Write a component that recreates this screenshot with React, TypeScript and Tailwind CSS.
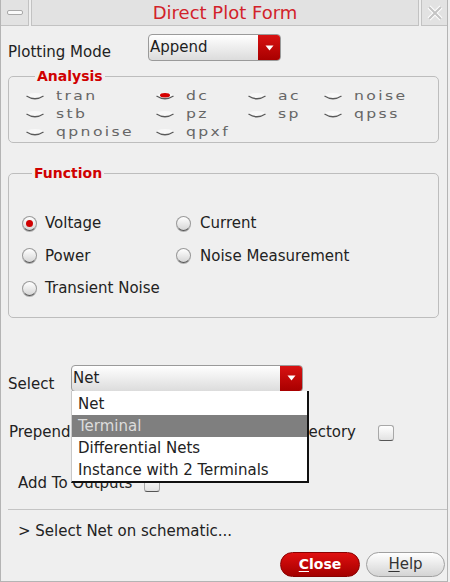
import React from "react";

const SmallRadio = ({ on }: { on?: boolean }) => (
  <svg width="20" height="9" viewBox="0 0 20 9" className="shrink-0">
    <ellipse cx="10" cy="4" rx="9" ry="3" fill="#f8f8f8" />
    <path d="M1.5 4 Q10 9.5 18.5 4" stroke="#5a5a5a" strokeWidth="1.4" fill="none" />
    {on && <ellipse cx="10" cy="3.2" rx="5" ry="2.2" fill="#d40000" />}
  </svg>
);

const BigRadio = ({ on }: { on?: boolean }) => (
  <div className="w-[15px] h-[15px] shrink-0 rounded-full border border-[#9a9a9a] border-b-[#555] bg-linear-to-b from-white to-[#d6d6d6] flex items-center justify-center shadow-[0_1px_0_#b0b0b0]">
    {on && <div className="w-[7px] h-[7px] rounded-full bg-[#d00000]" />}
  </div>
);

const Check = () => (
  <div className="w-[16px] h-[16px] rounded-[3px] border border-[#a8a8a8] border-b-[#555] bg-linear-to-b from-white to-[#e2e2e2]" />
);

const Arrow = () => (
  <div className="w-[22px] h-full bg-linear-to-b from-[#d81212] to-[#a80000] flex items-center justify-center">
    <svg width="9" height="6" viewBox="0 0 9 6">
      <path d="M0.5 0.5 L8.5 0.5 L4.5 5.5 Z" fill="#fff" />
    </svg>
  </div>
);

const Combo = ({ text, w }: { text: string; w: string }) => (
  <div className={`flex h-[27px] ${w} rounded-[4px] border border-[#9a9a9a] bg-linear-to-b from-white to-[#dcdcdc] overflow-hidden`}>
    <span className="flex-1 pl-[1px] text-[15px] leading-[24px] text-[#1e1e1e]">{text}</span>
    <Arrow />
  </div>
);

const AItem = ({ on, t }: { on?: boolean; t: string }) => (
  <div className="flex items-center gap-[11px] h-[18px]">
    <SmallRadio on={on} />
    <span className="inline-block origin-left scale-x-[1.2] text-[13px] tracking-[2px] text-[#666]">{t}</span>
  </div>
);

export default function App() {
  return (
    <div className="w-[450px] h-[582px] bg-[#efefef] overflow-hidden font-['DejaVu_Sans',sans-serif]">
      <div className="w-[448px] h-[582px] border-r border-l border-b border-[#b4b4b4] flex flex-col">
        {/* Title bar */}
        <div className="h-[27px] flex gap-[2px] shrink-0">
          <div className="w-[28px] h-[26px] bg-[#e2e2e2] border-r border-b border-[#c2c2c2] flex items-center justify-center">
            <div className="w-[16px] h-[5px] rounded-[2px] bg-[#fafafa] border border-[#a8a8a8]" />
          </div>
          <div className="flex-1 h-[26px] bg-[#e2e2e2] border-x border-b border-[#c2c2c2] flex items-center justify-center">
            <span className="text-[18px] leading-[22px] text-[#d2222a]">Direct Plot Form</span>
          </div>
          <div className="w-[26px] h-[26px] bg-[#e2e2e2] border-l border-b border-[#c2c2c2] flex items-center justify-center">
            <svg width="16" height="16" viewBox="0 0 16 16">
              <path d="M2 2 L14 14 M14 2 L2 14" stroke="#ffffff" strokeWidth="4" />
              <path d="M2 2 L14 14 M14 2 L2 14" stroke="#c4c4c4" strokeWidth="2" />
            </svg>
          </div>
        </div>

        {/* Plotting mode */}
        <div className="mt-[7px] h-[27px] flex">
          <span className="pl-[7px] w-[147px] text-[15px] leading-[18px] pt-[9px] text-[#222]">Plotting Mode</span>
          <Combo text="Append" w="w-[133px]" />
        </div>

        {/* Analysis */}
        <fieldset className="mt-[7px] ml-[7px] w-[431px] border border-[#bdbdbd] rounded-[5px] pb-[1px] pl-[16px]">
          <legend className="ml-[10px] px-[2px] text-[14px] leading-[16px] font-bold text-[#d00000]">Analysis</legend>
          <div className="grid grid-cols-[130px_92px_76px_1fr] pt-[3px]">
            <AItem t="tran" />
            <AItem t="dc" on />
            <AItem t="ac" />
            <AItem t="noise" />
            <AItem t="stb" />
            <AItem t="pz" />
            <AItem t="sp" />
            <AItem t="qpss" />
            <AItem t="qpnoise" />
            <AItem t="qpxf" />
          </div>
        </fieldset>

        {/* Function */}
        <fieldset className="mt-[22px] ml-[7px] w-[431px] border border-[#bdbdbd] rounded-[5px] pt-[26px] pb-[12px] pl-[13px]">
          <legend className="ml-[10px] px-[2px] text-[14px] leading-[16px] font-bold text-[#d00000]">Function</legend>
          <div className="grid grid-cols-[154px_1fr] text-[15px] text-[#222]">
            <div className="flex items-center gap-[8px] h-[32.5px]"><BigRadio on />Voltage</div>
            <div className="flex items-center gap-[9px] h-[32.5px]"><BigRadio />Current</div>
            <div className="flex items-center gap-[8px] h-[32.5px]"><BigRadio />Power</div>
            <div className="flex items-center gap-[9px] h-[32.5px]"><BigRadio />Noise Measurement</div>
            <div className="flex items-center gap-[8px] h-[32.5px]"><BigRadio />Transient Noise</div>
          </div>
        </fieldset>

        {/* Select */}
        <div className="mt-[47px] h-[27px] flex relative z-10">
          <span className="pl-[7px] w-[70px] text-[15px] leading-[18px] pt-[10px] text-[#222]">Select</span>
          <div className="relative">
            <Combo text="Net" w="w-[232px]" />
            <div className="absolute left-[0px] top-[26px] w-[238px] bg-white border-l border-[#c8c8c8] border-r-2 border-b-2 border-r-[#111] border-b-[#111] pt-[2px] text-[15px] text-[#222]">
              <div className="h-[22px] leading-[22px] pl-[6px]">Net</div>
              <div className="h-[22px] leading-[22px] pl-[6px] bg-[#7f7f7f] text-[#dcdcdc]">Terminal</div>
              <div className="h-[22px] leading-[22px] pl-[6px]">Differential Nets</div>
              <div className="h-[22px] leading-[22px] pl-[6px]">Instance with 2 Terminals</div>
            </div>
          </div>
        </div>

        {/* Prepend */}
        <div className="mt-[30px] h-[22px] flex items-center text-[15px] text-[#222]">
          <div className="pl-[8px] w-[355px] flex justify-between">
            <span>Prepend Design Point</span>
            <span>To Trajectory</span>
          </div>
          <div className="ml-[22px]"><Check /></div>
        </div>

        {/* Add to outputs */}
        <div className="mt-[29px] h-[22px] flex items-center gap-[12px] pl-[17px] text-[15px] text-[#222]">
          <span>Add To Outputs</span>
          <Check />
        </div>

        <div className="mt-[14px] ml-[7px] h-px bg-[#c4c4c4]" />

        <div className="mt-[11px] h-[22px] flex items-center pl-[17px] text-[15px] text-[#222]">
          &gt; Select Net on schematic...
        </div>

        <div className="mt-[9px] flex justify-end gap-[6px] pr-[2px]">
          <button className="w-[80px] h-[25px] rounded-full border border-[#8a0000] bg-linear-to-b from-[#e01010] to-[#a40000] text-white font-bold text-[14px] leading-[22px]">
            <u className="underline-offset-2">C</u>lose
          </button>
          <button className="w-[79px] h-[25px] rounded-full border border-[#a0a0a0] bg-linear-to-b from-white to-[#d4d4d4] text-[#333] text-[15px] leading-[22px]">
            <u className="underline-offset-2">H</u>elp
          </button>
        </div>
      </div>
    </div>
  );
}
